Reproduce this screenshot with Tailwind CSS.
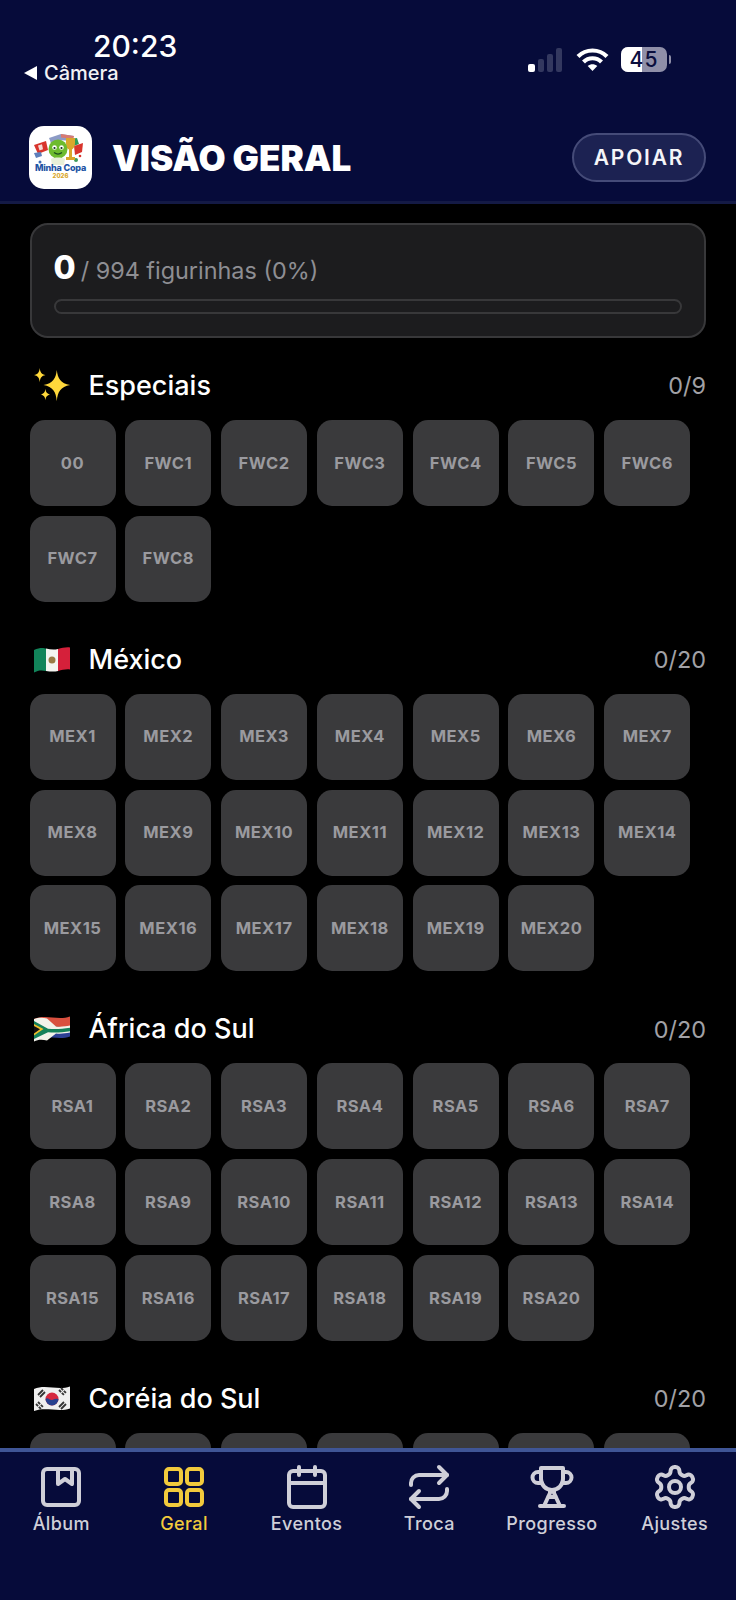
<!DOCTYPE html>
<html lang="pt-BR">
<head>
  <meta charset="UTF-8" />
  <meta name="viewport" content="width=device-width, initial-scale=1.0"/>
  <title>Visão Geral</title>
  <script src="https://cdn.jsdelivr.net/npm/@tailwindcss/browser@4"></script>
</head>
<body class="bg-black [font-family:Inter,sans-serif] text-white">
<div class="w-[736px] h-[1600px] flex flex-col overflow-hidden">

  <!-- topo -->
  <header class="h-[204px] shrink-0 bg-[#060b3a] border-b-[3px] border-[#141a45] relative">
    <div class="absolute left-[93px] top-[27px] text-[30px] leading-[38px] font-medium">20:23</div>
    <div class="absolute left-[24px] top-[60px] flex items-center gap-[7px]">
      <svg width="13" height="14" viewBox="0 0 13 14"><path d="M0 7 13 0v14z" fill="#fff"/></svg>
      <span class="text-[20px] leading-[26px] font-medium text-[#f2f2f5]">Câmera</span>
    </div>
    <!-- sinal -->
    <div class="absolute left-[528px] top-[48px] flex items-end gap-[3px] h-[24px]">
      <div class="w-[7px] h-[8px] rounded-[2px] bg-white"></div>
      <div class="w-[6px] h-[13px] rounded-[2px] bg-[#33385f]"></div>
      <div class="w-[6px] h-[18px] rounded-[2px] bg-[#33385f]"></div>
      <div class="w-[6px] h-[24px] rounded-[2px] bg-[#33385f]"></div>
    </div>
    <svg class="absolute left-[576px] top-[47px]" width="33" height="25" viewBox="0 0 33 25" fill="none" stroke="#fff" stroke-width="4.2">
      <path d="M2 9.500C10 1.500 23 1.500 31 9.500"/>
      <path d="M7.500 15c5-5 13-5 18 0"/>
      <path d="M16.500 24l-4.800-5c2.800-2.400 6.800-2.400 9.600 0z" fill="#fff" stroke="none"/>
    </svg>
    <div class="absolute left-[621px] top-[47px] w-[46px] h-[25px] rounded-[7px] overflow-hidden bg-[#8f8fa8] flex">
      <div class="w-[21px] h-full bg-white"></div>
      <div class="absolute inset-0 flex items-center justify-center text-[21px] font-medium text-[#0b0f3d] tracking-[1px]">45</div>
    </div>
    <div class="absolute left-[669px] top-[55px] w-[2px] h-[9px] rounded-r-[2px] bg-[#8f8fa8]"></div>

    <div class="absolute left-[29px] right-[30px] top-[126px] flex items-center">
      <svg width="63" height="63" viewBox="0 0 63 63" class="shrink-0">
        <rect width="63" height="63" rx="15" fill="#fff"/>
        <path d="M5 19l12-4 2 9-10 4z" fill="#d8342c"/>
        <path d="M9 19.500l4-1.300 1 5-3.500 1.300z" fill="#f6d9d5"/>
        <path d="M5 27l7-1 1 4-6 2z" fill="#5e7fbb"/>
        <path d="M20 12l12-4 13 2-2 5-13-1-8 3z" fill="#8c9bc6"/>
        <path d="M32 8l13 2-1 3-12-1.500z" fill="#d87a72"/>
        <path d="M40 13l8-1 2 6-8 3z" fill="#2f9a57"/>
        <path d="M45 20l9-3-1 9-7 3z" fill="#d8342c"/>
        <circle cx="47" cy="34" r="2" fill="#3f9a5a"/>
        <circle cx="51" cy="30" r="1.300" fill="#d8342c"/>
        <circle cx="11" cy="36" r="1.500" fill="#3c6bb5"/>
        <path d="M37 12h9v5c0 4-2 6-3 6.500V31h3v3h-9v-3h3v-7.500c-2-.5-3-3-3-6z" fill="#d9a72c"/>
        <circle cx="29" cy="23" r="9.500" fill="#6dbb2e"/>
        <path d="M22 33c3-2 11-2 14 0l-1 6H23z" fill="#e8f0d8"/>
        <circle cx="25.500" cy="21.500" r="2.300" fill="#fff"/><circle cx="32.500" cy="21.500" r="2.300" fill="#fff"/>
        <circle cx="25.500" cy="22" r="1.100" fill="#12301a"/><circle cx="32.500" cy="22" r="1.100" fill="#12301a"/>
        <path d="M25 26.500c2.500 2 5.500 2 8 0" fill="none" stroke="#1b4d1d" stroke-width="1.200"/>
        <text x="31.500" y="45" text-anchor="middle" font-family="Inter, sans-serif" font-size="9" font-weight="800" fill="#1f55a5" letter-spacing="-0.2">Minha Copa</text>
        <text x="31.500" y="51.500" text-anchor="middle" font-family="Inter, sans-serif" font-size="6" font-weight="800" fill="#d9a72c">2026</text>
      </svg>
      <h1 class="ml-[20px] text-[35px] leading-[40px] font-black">VISÃO GERAL</h1>
      <button class="ml-auto w-[134px] h-[49px] rounded-full bg-[#1c2252] border-2 border-[#454b78] text-[21px] font-semibold tracking-[1.800px] text-[#f5f5f8]">APOIAR</button>
    </div>
  </header>

  <!-- conteudo -->
  <main class="flex-1 overflow-hidden pl-[29.500px] pr-[30px] pt-[19px]">
    <div class="h-[115px] rounded-[18px] bg-[#1c1c1e] border-2 border-[#38383a] px-[22px] pt-[23px]">
      <div class="flex items-baseline h-[40px]">
        <span class="text-[32px] leading-[40px] font-extrabold">0</span>
        <span class="ml-[5px] text-[23.400px] leading-[40px] text-[#8e8e93]">/ 994 figurinhas (0%)</span>
      </div>
      <div class="mt-[11px] h-[15px] rounded-full bg-[#1c1c1e] border-2 border-[#38383a]"></div>
    </div>

    <section class="mt-[33px]">
      <div class="flex items-center h-[30px] mb-[19px]">
        <svg width="38" height="36" viewBox="0 0 40 38" class="shrink-0 ml-[4px] mr-[17px]" fill="#ffd83b">
          <path d="M24 2c1 9 4 14 14 16-10 2-13 7-14 17-1-10-4-15-14-17 10-2 13-7 14-16z"/>
          <path d="M6 0c.6 5 2 6.500 6 7.500-4 1-5.400 2.500-6 7.500-.6-5-2-6.500-6-7.500 4-1 5.400-2.500 6-7.500z"/>
          <path d="M12 22c.5 4 1.800 5.200 5 6-3.200.8-4.500 2-5 6-.5-4-1.800-5.200-5-6 3.200-.8 4.500-2 5-6z"/>
        </svg>
        <h2 class="text-[27px] leading-[30px] font-medium">Especiais</h2>
        <span class="ml-auto text-[23.400px] text-[#a1a1a6]">0/9</span>
      </div>
      <div class="flex flex-wrap gap-[9.800px]" data-tiles="00,FWC1,FWC2,FWC3,FWC4,FWC5,FWC6,FWC7,FWC8"></div>
    </section>

    <section class="mt-[43px]">
      <div class="flex items-center h-[30px] mb-[19px]">
        <svg width="36" height="26" viewBox="0 0 36 26" class="shrink-0 ml-[4px] mr-[19px]">
          <path d="M0 3c6-3 10-2 12-1.500V24c-4-1-8-1-12 1.500z" fill="#12845a"/>
          <path d="M12 1.500c4 1 8 1.500 12 .5v22c-4 1-8 .5-12 0z" fill="#f4f4f0"/>
          <path d="M24 2c4-1 8-2 12-1.500v22c-4-.5-8 .5-12 1.500z" fill="#d5203a"/>
          <circle cx="18" cy="13" r="3.500" fill="#9a7a45"/>
        </svg>
        <h2 class="text-[27px] leading-[30px] font-medium">México</h2>
        <span class="ml-auto text-[23.400px] text-[#a1a1a6]">0/20</span>
      </div>
      <div class="flex flex-wrap gap-[9.800px]" data-tiles="MEX1,MEX2,MEX3,MEX4,MEX5,MEX6,MEX7,MEX8,MEX9,MEX10,MEX11,MEX12,MEX13,MEX14,MEX15,MEX16,MEX17,MEX18,MEX19,MEX20"></div>
    </section>

    <section class="mt-[43px]">
      <div class="flex items-center h-[30px] mb-[19px]">
        <svg width="36" height="26" viewBox="0 0 36 26" class="shrink-0 ml-[4px] mr-[19px]">
          <path d="M0 3c12-5 24 2 36-2.500V10c-8 2-16 0-21 1z" fill="#d9503f"/>
          <path d="M0 23c12-5 24 2 36-2.500V14c-8 2-16 0-21 1z" fill="#2c3f94"/>
          <path d="M0 3c5-2 9-1.500 13-.5l9 8c5 .500 9 0 14-1v7c-5 1-9 1.500-14 1l-9 7c-5-1-9-1-13 1z" fill="#f2f2ea"/>
          <path d="M0 5l14 7.700c7 .5 14 .3 22-1v3.500c-8 1.300-15 1.500-22 1L0 23z" fill="#14815a"/>
          <path d="M0 8l9.500 5L0 19.500z" fill="#f0bd2a"/>
          <path d="M0 10l6 3.200L0 17.500z" fill="#111"/>
        </svg>
        <h2 class="text-[27px] leading-[30px] font-medium">África do Sul</h2>
        <span class="ml-auto text-[23.400px] text-[#a1a1a6]">0/20</span>
      </div>
      <div class="flex flex-wrap gap-[9.800px]" data-tiles="RSA1,RSA2,RSA3,RSA4,RSA5,RSA6,RSA7,RSA8,RSA9,RSA10,RSA11,RSA12,RSA13,RSA14,RSA15,RSA16,RSA17,RSA18,RSA19,RSA20"></div>
    </section>

    <section class="mt-[43px]">
      <div class="flex items-center h-[30px] mb-[19px]">
        <svg width="36" height="26" viewBox="0 0 36 26" class="shrink-0 ml-[4px] mr-[19px]">
          <path d="M0 3c12-5 24 2 36-2.500v22c-12 4-24-2-36 2.500z" fill="#efefef"/>
          <circle cx="18" cy="13" r="6.500" fill="#d5283f"/>
          <path d="M11.500 13c2-2.500 4.500 1.500 6.500 1s2.500-2 6.500-1a6.500 6.500 0 0 1-13 0z" fill="#27408f"/>
          <g stroke="#333" stroke-width="1.800">
            <path d="M4 9l5-5M6 11l5-5"/><path d="M25 4l5 5M27 2l5 5" stroke-dasharray="3 1"/>
            <path d="M4 16l5 5M2 18l5 5" stroke-dasharray="3 1"/><path d="M25 21l5-5M27 23l5-5"/>
          </g>
        </svg>
        <h2 class="text-[27px] leading-[30px] font-medium">Coréia do Sul</h2>
        <span class="ml-auto text-[23.400px] text-[#a1a1a6]">0/20</span>
      </div>
      <!-- a primeira linha fica cortada pelo menu, sem texto visivel -->
      <div class="flex flex-wrap gap-[9.800px]" data-tiles=",,,,,,"></div>
    </section>
  </main>

  <!-- menu de baixo -->
  <nav class="h-[152px] shrink-0 bg-[#060b3a] border-t-4 border-[#3f5596] grid grid-cols-6 pt-[11px] text-[18px] leading-[24px] tracking-[0.4px] font-medium text-[#cfcfd8]">
    <div class="flex flex-col items-center">
      <svg width="48" height="48" viewBox="0 0 24 24" fill="none" stroke="currentColor" stroke-width="2" stroke-linecap="round" stroke-linejoin="round">
        <rect x="3" y="3" width="18" height="18" rx="2"/><path d="M10.500 3v7.500l3.500-2.500 3.500 2.500V3"/>
      </svg>
      <span class="mt-px">Álbum</span>
    </div>
    <div class="flex flex-col items-center text-[#f2ca3c]">
      <svg width="48" height="48" viewBox="0 0 24 24" fill="none" stroke="currentColor" stroke-width="2" stroke-linecap="round" stroke-linejoin="round">
        <rect x="3" y="3" width="7.500" height="7.500" rx="1.500"/><rect x="13.500" y="3" width="7.500" height="7.500" rx="1.500"/>
        <rect x="3" y="13.500" width="7.500" height="7.500" rx="1.500"/><rect x="13.500" y="13.500" width="7.500" height="7.500" rx="1.500"/>
      </svg>
      <span class="mt-px">Geral</span>
    </div>
    <div class="flex flex-col items-center">
      <svg width="48" height="48" viewBox="0 0 24 24" fill="none" stroke="currentColor" stroke-width="2" stroke-linecap="round" stroke-linejoin="round">
        <path d="M8 2v4M16 2v4"/><rect x="3" y="4" width="18" height="18" rx="2"/><path d="M3 10h18"/>
      </svg>
      <span class="mt-px">Eventos</span>
    </div>
    <div class="flex flex-col items-center">
      <svg width="48" height="48" viewBox="0 0 24 24" fill="none" stroke="currentColor" stroke-width="2" stroke-linecap="round" stroke-linejoin="round">
        <path d="m17 2 4 4-4 4"/><path d="M3 11v-1a4 4 0 0 1 4-4h14"/><path d="m7 22-4-4 4-4"/><path d="M21 13v1a4 4 0 0 1-4 4H3"/>
      </svg>
      <span class="mt-px">Troca</span>
    </div>
    <div class="flex flex-col items-center">
      <svg width="48" height="48" viewBox="0 0 24 24" fill="none" stroke="currentColor" stroke-width="2" stroke-linecap="round" stroke-linejoin="round">
        <path d="M6.500 2.500h11V8a5.500 5.500 0 0 1-11 0z"/>
        <path d="M6.500 4.500H5a2.500 2.500 0 0 0 0 5.500h2M17.500 4.500H19a2.500 2.500 0 0 1 0 5.500h-2"/>
        <path d="M11 13.500v1.500L8 21.500M13 13.500v1.500l3 6.500M10 17h4M6 21.500h12"/>
      </svg>
      <span class="mt-px">Progresso</span>
    </div>
    <div class="flex flex-col items-center">
      <svg width="48" height="48" viewBox="0 0 24 24" fill="none" stroke="currentColor" stroke-width="2" stroke-linecap="round" stroke-linejoin="round">
        <path d="M12.220 2h-.44a2 2 0 0 0-2 2v.18a2 2 0 0 1-1 1.730l-.43.250a2 2 0 0 1-2 0l-.15-.08a2 2 0 0 0-2.730.730l-.22.380a2 2 0 0 0 .730 2.730l.15.100a2 2 0 0 1 1 1.720v.510a2 2 0 0 1-1 1.740l-.15.090a2 2 0 0 0-.730 2.730l.22.380a2 2 0 0 0 2.730.730l.15-.08a2 2 0 0 1 2 0l.43.250a2 2 0 0 1 1 1.730V20a2 2 0 0 0 2 2h.44a2 2 0 0 0 2-2v-.18a2 2 0 0 1 1-1.730l.43-.25a2 2 0 0 1 2 0l.15.08a2 2 0 0 0 2.730-.73l.22-.39a2 2 0 0 0-.73-2.730l-.15-.08a2 2 0 0 1-1-1.740v-.5a2 2 0 0 1 1-1.740l.15-.09a2 2 0 0 0 .73-2.730l-.22-.38a2 2 0 0 0-2.730-.73l-.15.08a2 2 0 0 1-2 0l-.43-.25a2 2 0 0 1-1-1.730V4a2 2 0 0 0-2-2z"/>
        <circle cx="12" cy="12" r="3"/>
      </svg>
      <span class="mt-px">Ajustes</span>
    </div>
  </nav>
</div>

<script>
  // preenche as figurinhas de cada grupo
  const tileClass = "w-[86px] h-[86px] rounded-[15px] bg-[#3a3a3c] flex items-center justify-center text-[16.500px] font-bold tracking-[0.5px] text-[#9a9a9f]";
  document.querySelectorAll("[data-tiles]").forEach(function(group) {
    group.dataset.tiles.split(",").forEach(function(code) {
      const tile = document.createElement("div");
      tile.className = tileClass;
      tile.textContent = code;
      group.appendChild(tile);
    });
  });
</script>
</body>
</html>
